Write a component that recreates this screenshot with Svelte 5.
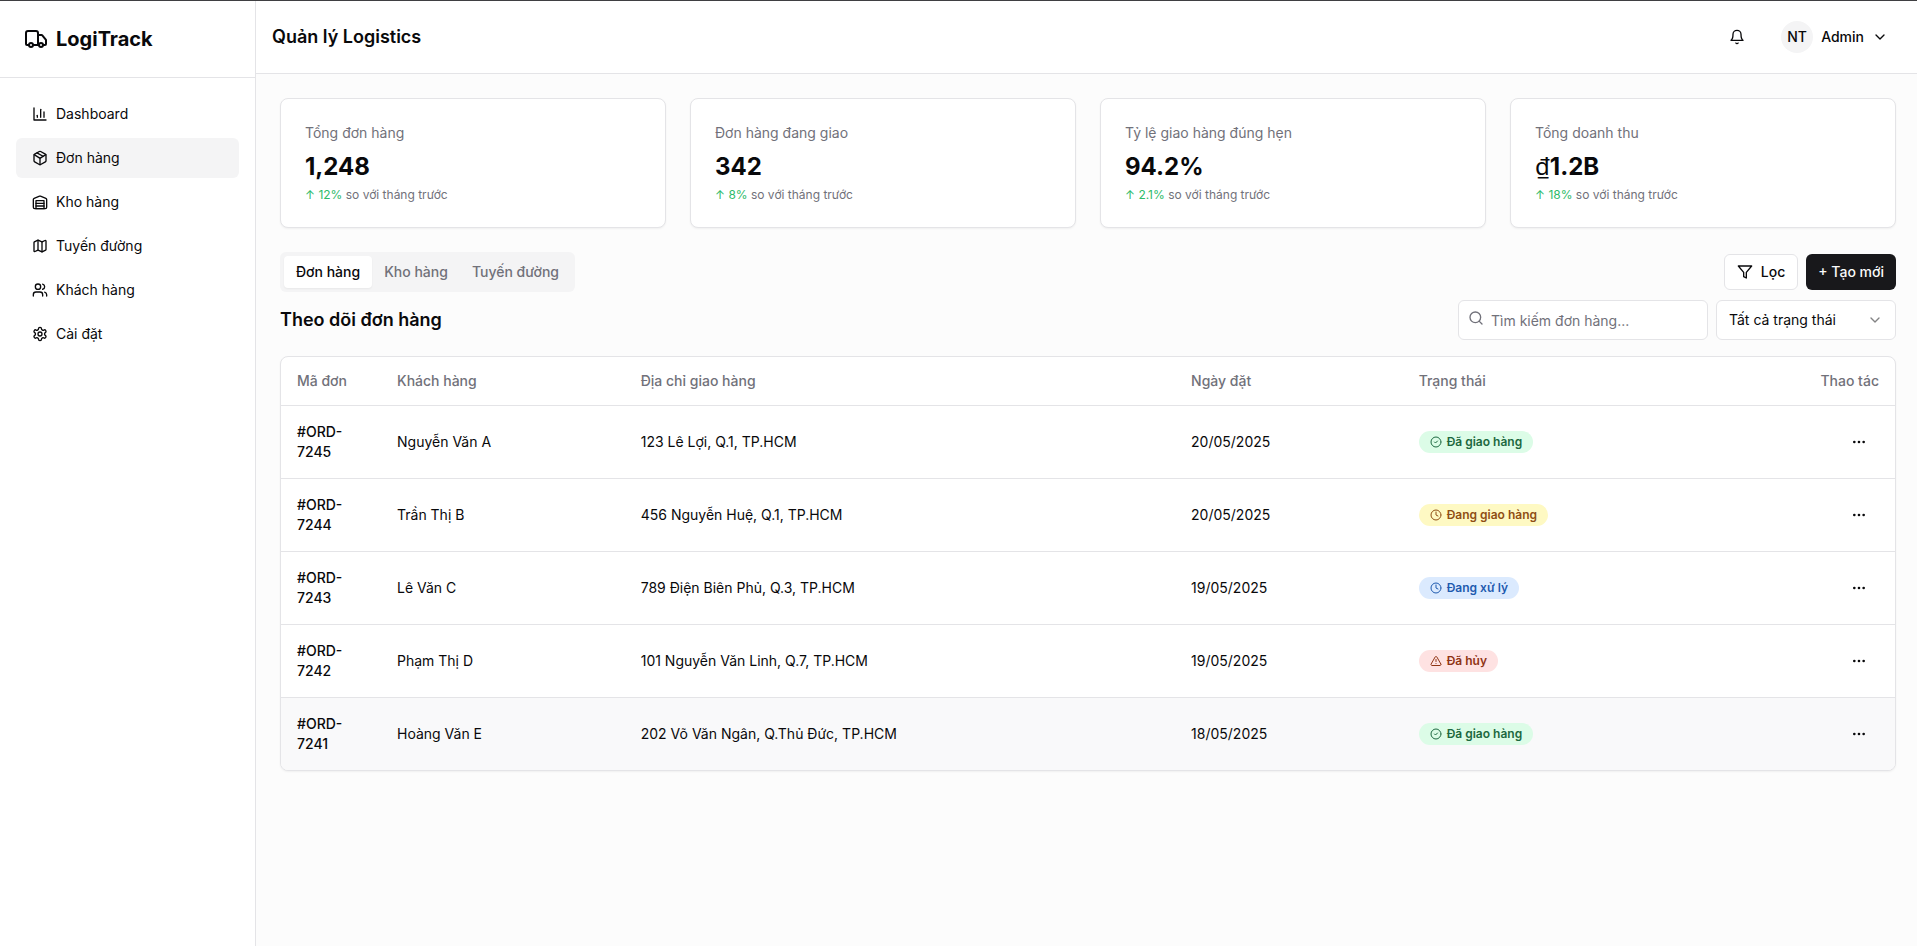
<script>
  const icons = {
    truck: [
      "M14 18V6a2 2 0 0 0-2-2H4a2 2 0 0 0-2 2v11a1 1 0 0 0 1 1h2",
      "M15 18H9",
      "M19 18h2a1 1 0 0 0 1-1v-3.65a1 1 0 0 0-.22-.624l-3.48-4.35A1 1 0 0 0 17.52 8H14",
      "M19 18a2 2 0 1 1-4 0a2 2 0 1 1 4 0",
      "M9 18a2 2 0 1 1-4 0a2 2 0 1 1 4 0",
    ],
    chart: ["M3 3v18h18", "M18 17V9", "M13 17V5", "M8 17v-3"],
    box: [
      "M11 21.73a2 2 0 0 0 2 0l7-4A2 2 0 0 0 21 16V8a2 2 0 0 0-1-1.73l-7-4a2 2 0 0 0-2 0l-7 4A2 2 0 0 0 3 8v8a2 2 0 0 0 1 1.73z",
      "M12 22V12",
      "m3.3 7 7.703 4.734a2 2 0 0 0 1.994 0L20.7 7",
      "m7.5 4.27 9 5.15",
    ],
    warehouse: [
      "M22 8.35V20a2 2 0 0 1-2 2H4a2 2 0 0 1-2-2V8.35A2 2 0 0 1 3.26 6.5l8-3.2a2 2 0 0 1 1.48 0l8 3.2A2 2 0 0 1 22 8.35Z",
      "M6 18h12",
      "M6 14h12",
      "M6 10h12v12H6z",
    ],
    map: [
      "M14.106 5.553a2 2 0 0 0 1.788 0l3.659-1.83A1 1 0 0 1 21 4.619v12.764a1 1 0 0 1-.553.894l-4.553 2.277a2 2 0 0 1-1.788 0l-4.212-2.106a2 2 0 0 0-1.788 0l-3.659 1.83A1 1 0 0 1 3 19.381V6.618a1 1 0 0 1 .553-.894l4.553-2.277a2 2 0 0 1 1.788 0z",
      "M15 5.764v15",
      "M9 3.236v15",
    ],
    users: [
      "M16 21v-2a4 4 0 0 0-4-4H6a4 4 0 0 0-4 4v2",
      "M13 7a4 4 0 1 1-8 0a4 4 0 1 1 8 0",
      "M22 21v-2a4 4 0 0 0-3-3.87",
      "M16 3.13a4 4 0 0 1 0 7.75",
    ],
    settings: [
      "M12.22 2h-.44a2 2 0 0 0-2 2v.18a2 2 0 0 1-1 1.73l-.43.25a2 2 0 0 1-2 0l-.15-.08a2 2 0 0 0-2.73.73l-.22.38a2 2 0 0 0 .73 2.73l.15.1a2 2 0 0 1 1 1.72v.51a2 2 0 0 1-1 1.74l-.15.09a2 2 0 0 0-.73 2.73l.22.38a2 2 0 0 0 2.73.73l.15-.08a2 2 0 0 1 2 0l.43.25a2 2 0 0 1 1 1.73V20a2 2 0 0 0 2 2h.44a2 2 0 0 0 2-2v-.18a2 2 0 0 1 1-1.73l.43-.25a2 2 0 0 1 2 0l.15.08a2 2 0 0 0 2.73-.73l.22-.39a2 2 0 0 0-.73-2.73l-.15-.08a2 2 0 0 1-1-1.74v-.5a2 2 0 0 1 1-1.74l.15-.09a2 2 0 0 0 .73-2.73l-.22-.38a2 2 0 0 0-2.73-.73l-.15.08a2 2 0 0 1-2 0l-.43-.25a2 2 0 0 1-1-1.73V4a2 2 0 0 0-2-2z",
      "M15 12a3 3 0 1 1-6 0a3 3 0 1 1 6 0",
    ],
    bell: ["M6 8a6 6 0 0 1 12 0c0 7 3 9 3 9H3s3-2 3-9", "M10.3 21a1.94 1.94 0 0 0 3.4 0"],
    chevron: ["m6 9 6 6 6-6"],
    filter: ["M22 3H2l8 9.46V19l4 2v-8.54z"],
    search: ["M19 11a8 8 0 1 1-16 0a8 8 0 1 1 16 0", "m21 21-4.3-4.3"],
    check: ["M22 12a10 10 0 1 1-20 0a10 10 0 1 1 20 0", "m9 12 2 2 4-4"],
    clock: ["M22 12a10 10 0 1 1-20 0a10 10 0 1 1 20 0", "M12 6v6l4 2"],
    alert: [
      "m21.73 18-8-14a2 2 0 0 0-3.48 0l-8 14A2 2 0 0 0 4 21h16a2 2 0 0 0 1.73-3",
      "M12 9v4",
      "M12 17h.01",
    ],
    more: [
      "M13 12a1 1 0 1 1-2 0a1 1 0 1 1 2 0",
      "M20 12a1 1 0 1 1-2 0a1 1 0 1 1 2 0",
      "M6 12a1 1 0 1 1-2 0a1 1 0 1 1 2 0",
    ],
  };

  const menu = [
    { icon: "chart", label: "Dashboard" },
    { icon: "box", label: "Đơn hàng" },
    { icon: "warehouse", label: "Kho hàng" },
    { icon: "map", label: "Tuyến đường" },
    { icon: "users", label: "Khách hàng" },
    { icon: "settings", label: "Cài đặt" },
  ];

  const stats = [
    { label: "Tổng đơn hàng", value: "1,248", change: "12%" },
    { label: "Đơn hàng đang giao", value: "342", change: "8%" },
    { label: "Tỷ lệ giao hàng đúng hẹn", value: "94.2%", change: "2.1%" },
    { label: "Tổng doanh thu", currency: "₫", value: "1.2B", change: "18%" },
  ];

  const tabs = ["Đơn hàng", "Kho hàng", "Tuyến đường"];

  const statuses = {
    delivered: { label: "Đã giao hàng", icon: "check" },
    shipping: { label: "Đang giao hàng", icon: "clock" },
    processing: { label: "Đang xử lý", icon: "clock" },
    cancelled: { label: "Đã hủy", icon: "alert" },
  };

  const orders = [
    { id: "#ORD-7245", customer: "Nguyễn Văn A", address: "123 Lê Lợi, Q.1, TP.HCM", date: "20/05/2025", status: "delivered" },
    { id: "#ORD-7244", customer: "Trần Thị B", address: "456 Nguyễn Huệ, Q.1, TP.HCM", date: "20/05/2025", status: "shipping" },
    { id: "#ORD-7243", customer: "Lê Văn C", address: "789 Điện Biên Phủ, Q.3, TP.HCM", date: "19/05/2025", status: "processing" },
    { id: "#ORD-7242", customer: "Phạm Thị D", address: "101 Nguyễn Văn Linh, Q.7, TP.HCM", date: "19/05/2025", status: "cancelled" },
    { id: "#ORD-7241", customer: "Hoàng Văn E", address: "202 Võ Văn Ngân, Q.Thủ Đức, TP.HCM", date: "18/05/2025", status: "delivered" },
  ];

  let activeMenu = $state("Đơn hàng");
  let activeTab = $state("Đơn hàng");
  let selected = $state("#ORD-7241");
  let query = $state("");
  let filter = $state("all");

  const visible = $derived(
    orders.filter(
      (o) =>
        (filter === "all" || o.status === filter) &&
        (o.id + o.customer + o.address).toLowerCase().includes(query.toLowerCase())
    )
  );
</script>

{#snippet icon(name, size = 16)}
  <svg width={size} height={size} viewBox="0 0 24 24" fill="none" stroke="currentColor" stroke-width="2" stroke-linecap="round" stroke-linejoin="round" aria-hidden="true">
    {#each icons[name] as d}
      <path {d} />
    {/each}
  </svg>
{/snippet}

<div class="app">
  <aside class="sidebar">
    <div class="logo">
      {@render icon("truck", 24)}
      <span>LogiTrack</span>
    </div>
    <nav>
      {#each menu as item}
        <button class:active={activeMenu === item.label} onclick={() => (activeMenu = item.label)}>
          {@render icon(item.icon)}
          {item.label}
        </button>
      {/each}
    </nav>
  </aside>

  <div class="content">
    <header>
      <h1>Quản lý Logistics</h1>
      <div class="user">
        <button class="icon-button" aria-label="Thông báo">{@render icon("bell")}</button>
        <button class="account">
          <span class="avatar">NT</span>
          <span>Admin</span>
          {@render icon("chevron")}
        </button>
      </div>
    </header>

    <main>
      <section class="stats">
        {#each stats as stat}
          <article class="card">
            <p class="label">{stat.label}</p>
            <p class="value">{#if stat.currency}<span class="currency">{stat.currency}</span>{/if}{stat.value}</p>
            <p class="note"><span class="up">↑ {stat.change}</span> so với tháng trước</p>
          </article>
        {/each}
      </section>

      <div class="toolbar">
        <div class="tabs" role="tablist">
          {#each tabs as tab}
            <button role="tab" aria-selected={activeTab === tab} class:active={activeTab === tab} onclick={() => (activeTab = tab)}>{tab}</button>
          {/each}
        </div>
        <div class="actions">
          <button class="outline">{@render icon("filter")} Lọc</button>
          <button class="primary">+ Tạo mới</button>
        </div>
      </div>

      <div class="list-head">
        <h2>Theo dõi đơn hàng</h2>
        <div class="actions">
          <div class="search">
            <span class="search-icon">{@render icon("search")}</span>
            <input type="search" placeholder="Tìm kiếm đơn hàng..." aria-label="Tìm kiếm đơn hàng" bind:value={query} />
          </div>
          <div class="select">
            <select aria-label="Trạng thái" bind:value={filter}>
              <option value="all">Tất cả trạng thái</option>
              {#each Object.entries(statuses) as [key, status]}
                <option value={key}>{status.label}</option>
              {/each}
            </select>
            <span class="select-icon">{@render icon("chevron")}</span>
          </div>
        </div>
      </div>

      <div class="table-card">
        <table>
          <thead>
            <tr>
              <th class="col-id">Mã đơn</th>
              <th class="col-customer">Khách hàng</th>
              <th class="col-address">Địa chỉ giao hàng</th>
              <th class="col-date">Ngày đặt</th>
              <th>Trạng thái</th>
              <th class="right">Thao tác</th>
            </tr>
          </thead>
          <tbody>
            {#each visible as order (order.id)}
              <tr class:selected={selected === order.id} onmouseenter={() => (selected = order.id)}>
                <td class="id">{order.id}</td>
                <td>{order.customer}</td>
                <td>{order.address}</td>
                <td>{order.date}</td>
                <td>
                  <span class="badge {order.status}">
                    {@render icon(statuses[order.status].icon, 12)}
                    {statuses[order.status].label}
                  </span>
                </td>
                <td class="right">
                  <button class="icon-button" aria-label="Thao tác {order.id}">{@render icon("more")}</button>
                </td>
              </tr>
            {/each}
          </tbody>
        </table>
      </div>
    </main>
  </div>
</div>

<style>
  :global(body) {
    background: #fcfcfc;
  }

  .app {
    --text: #09090b;
    --muted: #71717a;
    --border: #e4e4e7;
    --soft: #f4f4f5;
    display: flex;
    min-height: 100vh;
    box-sizing: border-box;
    border-top: 1px solid #3f3f42;
    font-family: Inter, "Liberation Sans", sans-serif;
    font-size: 14px;
    line-height: 20px;
    color: var(--text);
  }

  .app :global(*) {
    box-sizing: border-box;
  }

  svg {
    flex-shrink: 0;
    display: block;
  }

  button {
    font: inherit;
    color: inherit;
    border: none;
    background: none;
    padding: 0;
    cursor: pointer;
    white-space: nowrap;
  }

  h1,
  h2,
  p {
    margin: 0;
  }

  h1,
  h2 {
    font-size: 18px;
    line-height: 28px;
    font-weight: 600;
  }

  .sidebar {
    width: 256px;
    flex-shrink: 0;
    background: #fff;
    border-right: 1px solid var(--border);
  }

  .logo {
    display: flex;
    align-items: center;
    gap: 8px;
    padding: 24px;
    border-bottom: 1px solid var(--border);
    font-size: 20px;
    line-height: 28px;
    font-weight: 700;
  }

  nav {
    display: flex;
    flex-direction: column;
    gap: 4px;
    padding: 16px;
  }

  nav button {
    display: flex;
    align-items: center;
    gap: 8px;
    height: 40px;
    padding: 0 16px;
    border-radius: 6px;
  }

  nav button.active,
  nav button:hover {
    background: var(--soft);
  }

  .content {
    flex: 1;
    min-width: 0;
  }

  header {
    display: flex;
    align-items: center;
    justify-content: space-between;
    height: 73px;
    padding: 0 13px 0 16px;
    background: #fff;
    border-bottom: 1px solid var(--border);
  }

  .user,
  .actions {
    display: flex;
    align-items: center;
    gap: 8px;
  }

  .icon-button {
    display: inline-flex;
    align-items: center;
    justify-content: center;
    width: 40px;
    height: 40px;
    border-radius: 6px;
    vertical-align: top;
  }

  .account {
    display: flex;
    align-items: center;
    gap: 8px;
    height: 40px;
    padding: 0 16px;
    font-weight: 500;
  }

  .avatar {
    display: flex;
    align-items: center;
    justify-content: center;
    width: 32px;
    height: 32px;
    border-radius: 50%;
    background: var(--soft);
  }

  main {
    padding: 24px 21px 24px 24px;
  }

  .stats {
    display: grid;
    grid-template-columns: repeat(4, 1fr);
    gap: 24px;
    margin-bottom: 24px;
  }

  .card,
  .table-card {
    background: #fff;
    border: 1px solid var(--border);
    border-radius: 8px;
    box-shadow: 0 1px 2px rgba(0, 0, 0, 0.05);
  }

  .card {
    padding: 24px;
  }

  .label {
    color: var(--muted);
  }

  .value {
    margin: 8px 0 4px;
    font-size: 24px;
    line-height: 32px;
    font-weight: 700;
  }

  .currency {
    font-family: "Noto Sans", sans-serif;
    font-weight: 400;
    line-height: 1;
  }

  .note {
    color: var(--muted);
    font-size: 12px;
    line-height: 16px;
  }

  .up {
    color: #2dbb6a;
  }

  .toolbar,
  .list-head {
    display: flex;
    align-items: center;
    justify-content: space-between;
  }

  .toolbar {
    margin-bottom: 8px;
  }

  .list-head {
    margin-bottom: 16px;
  }

  .tabs {
    display: flex;
    height: 40px;
    padding: 4px;
    border-radius: 6px;
    background: var(--soft);
  }

  .tabs button {
    padding: 0 12px;
    border-radius: 4px;
    color: var(--muted);
    font-weight: 500;
  }

  .tabs button.active {
    background: #fff;
    color: var(--text);
    box-shadow: 0 1px 2px rgba(0, 0, 0, 0.05);
  }

  .outline,
  .primary {
    display: flex;
    align-items: center;
    gap: 8px;
    height: 36px;
    padding: 0 12px;
    border-radius: 6px;
    font-weight: 500;
  }

  .outline {
    background: #fff;
    border: 1px solid var(--border);
  }

  .primary {
    background: #18181b;
    color: #fafafa;
  }

  .search,
  .select {
    position: relative;
  }

  .search {
    width: 250px;
  }

  .select {
    width: 180px;
  }

  .search-icon {
    position: absolute;
    top: 10px;
    left: 10px;
    color: var(--muted);
  }

  .select-icon {
    position: absolute;
    top: 12px;
    right: 13px;
    opacity: 0.5;
    pointer-events: none;
  }

  input,
  select {
    display: block;
    appearance: none;
    width: 100%;
    height: 40px;
    padding: 0 12px;
    border: 1px solid var(--border);
    border-radius: 6px;
    background: #fff;
    color: var(--text);
    font: inherit;
  }

  input {
    padding-left: 32px;
  }

  input::placeholder {
    color: var(--muted);
  }

  .table-card {
    overflow: hidden;
  }

  table {
    width: 100%;
    table-layout: fixed;
    border-collapse: separate;
    border-spacing: 0;
  }

  th {
    height: 49px;
    padding: 0 16px;
    border-bottom: 1px solid var(--border);
    color: var(--muted);
    font-weight: 500;
    text-align: left;
  }

  .col-id {
    width: 100px;
  }

  .col-customer {
    width: 15.1%;
  }

  .col-address {
    width: 34.1%;
  }

  .col-date {
    width: 14.1%;
  }

  td {
    padding: 16px;
    border-bottom: 1px solid var(--border);
  }

  tr:last-child td {
    border-bottom: none;
  }

  .right {
    text-align: right;
  }

  .id {
    font-weight: 500;
  }

  .selected {
    background: #f9f9fa;
  }

  .badge {
    display: inline-flex;
    align-items: center;
    gap: 5px;
    padding: 3px 11px;
    border-radius: 11px;
    font-size: 12px;
    line-height: 16px;
    font-weight: 600;
    vertical-align: middle;
  }

  .delivered {
    background: #dcfce7;
    color: #1c6840;
  }

  .shipping {
    background: #fef9c3;
    color: #8f4e14;
  }

  .processing {
    background: #dbeafe;
    color: #1e5aae;
  }

  .cancelled {
    background: #fee2e2;
    color: #8f3414;
  }
</style>
